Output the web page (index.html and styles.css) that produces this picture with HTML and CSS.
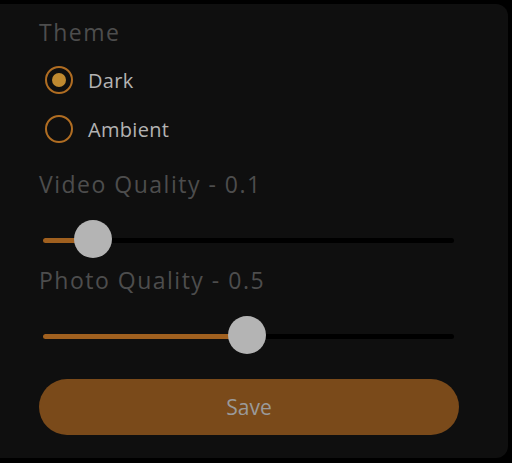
FILE: index.html
```html
<!doctype html>
<html lang="en">
<head>
  <meta charset="utf-8">
  <title>Settings</title>
  <link rel="stylesheet" href="styles.css">
</head>
<body>

<div class="panel">
  <div class="heading">Theme</div>
  <div class="options">
    <label class="option">
      <span class="radio checked"></span>
      <span class="option-text">Dark</span>
    </label>
    <label class="option">
      <span class="radio"></span>
      <span class="option-text">Ambient</span>
    </label>
  </div>

  <div class="heading spaced">Video Quality - 0.1</div>
  <div class="slider" style="--v: 0.1">
    <div class="track"><div class="fill"></div></div>
    <div class="thumb"></div>
  </div>

  <div class="heading">Photo Quality - 0.5</div>
  <div class="slider" style="--v: 0.5">
    <div class="track"><div class="fill"></div></div>
    <div class="thumb"></div>
  </div>

  <button class="save">Save</button>
</div>

</body>
</html>
```

FILE: styles.css
```css
body {
  margin: 0;
  background: #000;
  font-family: "Open Sans", "Noto Sans", sans-serif;
}
.panel {
  margin: 4px 4px 0 0;
  padding: 14px 49px 23px 39px;
  background: #0f0f0f;
  border-radius: 0 12px 12px 0;
  display: flex;
  flex-direction: column;
}
.heading {
  font-size: 23px;
  line-height: 28px;
  letter-spacing: 1.5px;
  color: #4d4d4d;
}
.heading.spaced {
  margin-top: 21px;
}
.slider + .heading {
  margin-top: 6px;
}
.options {
  display: flex;
  flex-direction: column;
  gap: 9px;
  margin-top: 14px;
}
.option {
  display: flex;
  align-items: center;
  gap: 15px;
  height: 40px;
  padding-left: 6px;
}
.radio {
  width: 28px;
  height: 28px;
  box-sizing: border-box;
  border: 2px solid #b06d22;
  border-radius: 50%;
  display: flex;
  align-items: center;
  justify-content: center;
}
.radio.checked::after {
  content: "";
  width: 14px;
  height: 14px;
  border-radius: 50%;
  background: #c08a30;
}
.option-text {
  font-size: 20px;
  letter-spacing: 0.3px;
  color: #b3b3b3;
}
.slider {
  position: relative;
  flex-shrink: 0;
  height: 40px;
  margin: 22px 5px 0 4px;
  display: flex;
  align-items: center;
}
.track {
  flex: 1;
  height: 5px;
  border-radius: 3px;
  background: #000;
  overflow: hidden;
}
.fill {
  height: 100%;
  width: calc(12px + (100% - 28px) * var(--v));
  background: #a0601f;
}
.thumb {
  position: absolute;
  top: 0;
  left: calc(12px + (100% - 28px) * var(--v) - 19px);
  width: 38px;
  height: 38px;
  border-radius: 50%;
  background: #b4b4b4;
}
.save {
  margin-top: 23px;
  height: 56px;
  flex-shrink: 0;
  border: none;
  border-radius: 28px;
  background: #7a4a1a;
  color: #9a9a9a;
  font-family: inherit;
  font-size: 21px;
}
```
